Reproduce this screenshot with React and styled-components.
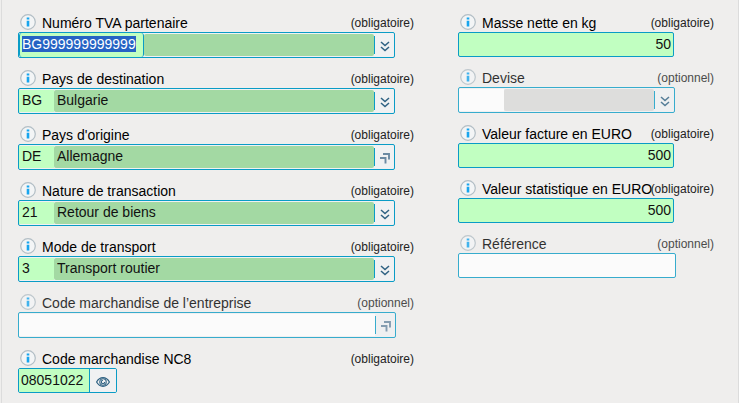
import React, { useEffect, useRef } from 'react';
import styled, { createGlobalStyle, css } from 'styled-components';

const GlobalStyle = createGlobalStyle`
  *, *::before, *::after { box-sizing: border-box; }
  html { background: #efeeed; }
  body {
    margin: 0;
    font-family: "Liberation Sans", Arial, sans-serif;
    font-size: 14px;
    color: #111;
  }
  input, button { font: inherit; color: inherit; margin: 0; }
`;

const Panel = styled.form`
  display: grid;
  grid-template-columns: minmax(0, 396fr) minmax(0, 256fr);
  column-gap: 44px;
  align-items: start;
  min-height: 100vh;
  padding: 14px 24px 9px 16px;
  border: solid #dcdcdc;
  border-width: 0 1px;
  margin-left: 1px;
  background: #efeeed;
`;

const Column = styled.div`
  display: flex;
  flex-direction: column;
  gap: 12px;
  min-width: 0;
`;

const FieldGroup = styled.div`
  opacity: ${(p) => (p.$optional ? 0.8 : 1)};
`;

const Caption = styled.div`
  display: flex;
  height: 18px;
  line-height: 18px;
  white-space: nowrap;
`;

const InfoButton = styled.button`
  flex: none;
  display: block;
  width: 16px;
  height: 16px;
  padding: 0;
  margin: 0 6px 0 2px;
  border: 0;
  background: none;
`;

const FieldLabel = styled.label`
  flex: 1;
  min-width: 0;
  color: #000;
`;

const Requirement = styled.span`
  font-size: 12px;
  color: #222;
`;

const frame = css`
  border: 1px solid #0a9cc6;
  border-radius: 2px;
`;

const Combo = styled.div`
  ${frame}
  display: flex;
  height: 26px;
  padding: 1px 0;
  margin-right: ${(p) => p.$inset}px;
  background: #f0f1f2;
`;

const CodeInput = styled.input`
  flex: ${(p) => (p.$fill ? '1' : 'none')};
  width: ${(p) => p.$width}px;
  min-width: 0;
  height: 22px;
  padding: 0 0 2px 3px;
  border: 0;
  border-radius: 0;
  outline: 0;
  background: ${(p) => (p.$optional ? '#ffffff' : '#c1ffc1')};
  &::selection { background: #2563c4; color: #fff; }
`;

const ActiveInput = styled(CodeInput)`
  height: 24px;
  margin: -1px 0;
  padding-left: 2px;
  border: solid #0a9cc6;
  border-width: 0 1px;
  border-radius: 3px;
`;

const DescriptionInput = styled.input`
  flex: 1;
  width: 0;
  min-width: 0;
  height: 22px;
  padding: 0 3px 2px;
  border: 0;
  border-radius: 2px;
  outline: 0;
  background: ${(p) => (p.$optional ? '#d9d9d9' : '#a3d9a3')};
`;

const ComboButton = styled.button`
  flex: none;
  display: flex;
  align-items: center;
  justify-content: center;
  width: 20px;
  height: 18px;
  padding: 2px 0 0 1px;
  margin: 2px 0;
  border: 0;
  border-left: 1px solid #0a9cc6;
  background: none;
`;

const TextInput = styled.input`
  ${frame}
  display: block;
  width: calc(100% - ${(p) => p.$inset}px);
  height: 25px;
  padding: 0 2px 2px;
  outline: 0;
  text-align: right;
  background: ${(p) => (p.$optional ? '#ffffff' : '#c1ffc1')};
`;

const CodeGroup = styled.div`
  ${frame}
  display: inline-flex;
  height: 25px;
  overflow: hidden;
  vertical-align: top;
`;

const ShortInput = styled(CodeInput)`
  height: 23px;
  padding-left: 2px;
`;

const ViewButton = styled.button`
  display: flex;
  align-items: center;
  justify-content: center;
  width: 27px;
  padding: 2px 0 0;
  border: 0;
  border-left: 1px solid #0a9cc6;
  background: #f0f1f2;
`;

const Icon = styled.svg`
  display: block;
  fill: none;
  stroke: #2f6283;
`;

const InfoIcon = () => (
  <Icon width="16" height="16" viewBox="0 0 16 16" aria-hidden="true">
    <circle cx="8" cy="8" r="7.3" fill="#f3f5f6" stroke="#b2bec5" strokeWidth="1.2" />
    <path d="M8 3.5v2M8 6.7v5.8" stroke="#18a5ee" strokeWidth="2.6" />
  </Icon>
);

const ChevronsIcon = () => (
  <Icon width="10" height="11" viewBox="0 0 10 11" aria-hidden="true">
    <path d="M1 1l4 3.6L9 1M1 6l4 3.6L9 6" strokeWidth="1.5" />
  </Icon>
);

const LookupIcon = () => (
  <Icon width="10" height="11" viewBox="0 0 10 11" aria-hidden="true">
    <path d="M3 1h6v5.500M0 5h5.500v5.500" stroke="#6b8aa2" strokeWidth="1.9" />
  </Icon>
);

const EyeIcon = () => (
  <Icon width="14" height="10" viewBox="0 0 14 10" aria-hidden="true">
    <path d="M.6 5C2.2 2.2 4.3.7 7 .7S11.8 2.2 13.4 5C11.8 7.8 9.7 9.3 7 9.3S2.200 7.800.6 5z" strokeWidth="1.2" />
    <circle cx="7" cy="5" r="3.2" strokeWidth="1.1" />
    <path d="M7 3.3a1.7 1.7 0 1 0 1.7 1.7" strokeWidth="1.1" />
  </Icon>
);

function Field({ id, label, optional, children }) {
  return (
    <FieldGroup $optional={optional}>
      <Caption>
        <InfoButton type="button" aria-label={`Information : ${label}`}>
          <InfoIcon />
        </InfoButton>
        <FieldLabel htmlFor={id}>{label}</FieldLabel>
        <Requirement>{optional ? '(optionnel)' : '(obligatoire)'}</Requirement>
      </Caption>
      {children}
    </FieldGroup>
  );
}

function ComboField({ id, label, code, description, optional, lookup, wide, codeWidth = 35, inset = 19 }) {
  return (
    <Field id={id} label={label} optional={optional}>
      <Combo $inset={inset}>
        <CodeInput id={id} defaultValue={code} $optional={optional} $width={codeWidth} $fill={wide} />
        {!wide && (
          <DescriptionInput readOnly value={description} aria-label={`${label} : description`} $optional={optional} />
        )}
        <ComboButton type="button" aria-label={`Choisir : ${label}`}>
          {lookup ? <LookupIcon /> : <ChevronsIcon />}
        </ComboButton>
      </Combo>
    </Field>
  );
}

function VatField() {
  const input = useRef(null);
  useEffect(() => {
    input.current.focus();
    input.current.select();
  }, []);
  return (
    <Field id="tva" label="Numéro TVA partenaire">
      <Combo $inset={19}>
        <ActiveInput ref={input} id="tva" defaultValue="BG999999999999" $width={125} />
        <DescriptionInput readOnly value="" aria-label="Partenaire" />
        <ComboButton type="button" aria-label="Choisir un partenaire">
          <ChevronsIcon />
        </ComboButton>
      </Combo>
    </Field>
  );
}

function ValueField({ id, label, value, optional, inset = 40 }) {
  return (
    <Field id={id} label={label} optional={optional}>
      <TextInput id={id} defaultValue={value} $optional={optional} $inset={inset} />
    </Field>
  );
}

export default function App() {
  return (
    <>
      <GlobalStyle />
      <Panel>
        <Column>
          <VatField />
          <ComboField id="destination" label="Pays de destination" code="BG" description="Bulgarie" />
          <ComboField id="origine" label="Pays d'origine" code="DE" description="Allemagne" lookup />
          <ComboField id="nature" label="Nature de transaction" code="21" description="Retour de biens" />
          <ComboField id="transport" label="Mode de transport" code="3" description="Transport routier" />
          <ComboField id="entreprise" label="Code marchandise de l’entreprise" code="" optional lookup wide inset={18} />
          <Field id="nc8" label="Code marchandise NC8">
            <CodeGroup>
              <ShortInput id="nc8" defaultValue="08051022" $width={70} />
              <ViewButton type="button" aria-label="Voir le code marchandise">
                <EyeIcon />
              </ViewButton>
            </CodeGroup>
          </Field>
        </Column>
        <Column>
          <ValueField id="masse" label="Masse nette en kg" value="50" />
          <ComboField id="devise" label="Devise" code="" description="" optional codeWidth={45} inset={39} />
          <ValueField id="facture" label="Valeur facture en EURO" value="500" />
          <ValueField id="statistique" label="Valeur statistique en EURO" value="500" />
          <ValueField id="reference" label="Référence" value="" optional inset={38} />
        </Column>
      </Panel>
    </>
  );
}
